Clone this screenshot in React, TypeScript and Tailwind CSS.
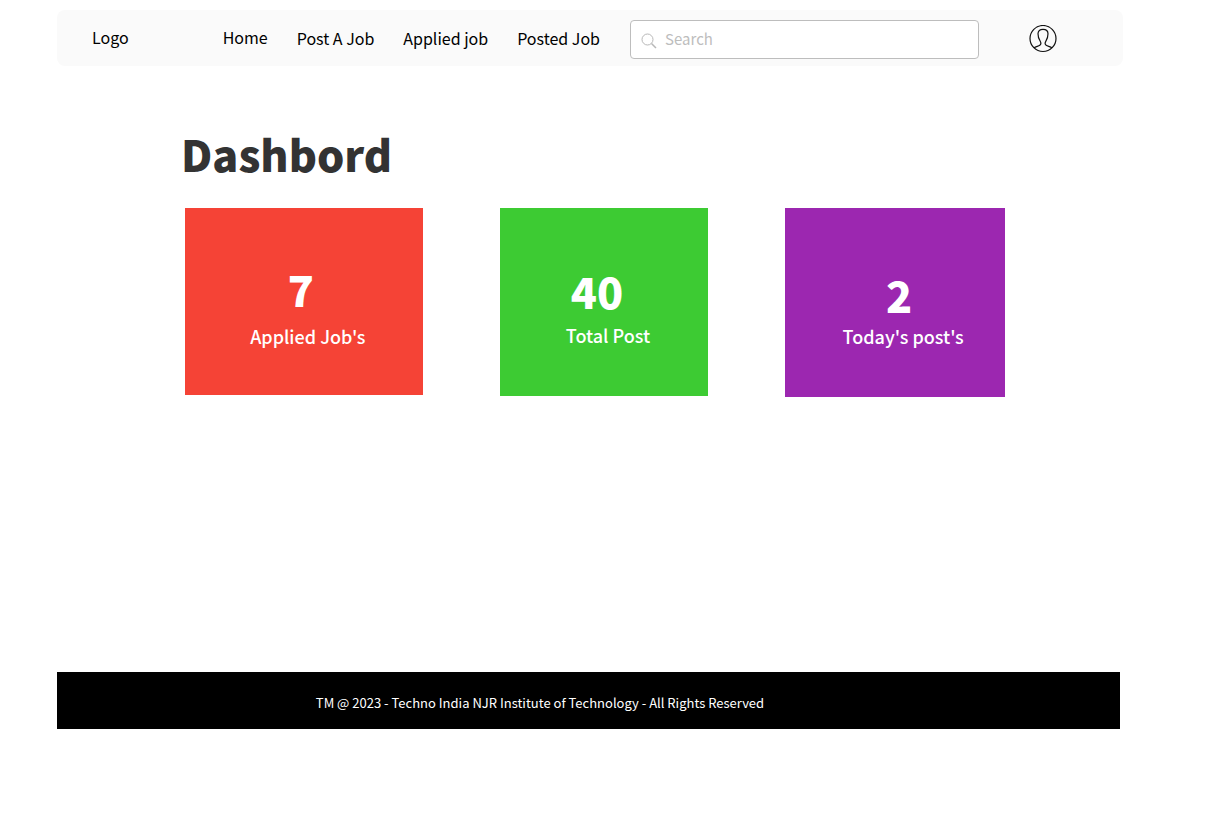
const navLinks = [
  { label: "Home", pad: "pb-0.5" },
  { label: "Post A Job", pad: "" },
  { label: "Applied job", pad: "" },
  { label: "Posted Job", pad: "" },
];

const stats = [
  { value: "7", label: "Applied Job's", card: "bg-[#f54336] min-h-[187px] pt-[52px]", valueBox: "pr-1.5", labelBox: "pl-2 pt-1.5" },
  { value: "40", label: "Total Post", card: "bg-[#3dcb33] min-h-[188px] pt-[54px]", valueBox: "pr-3.5", labelBox: "pl-2 pt-[3px]" },
  { value: "2", label: "Today's post's", card: "bg-[#9c27b0] min-h-[189px] pt-[58px]", valueBox: "pl-2", labelBox: "pl-4" },
];

function SearchIcon() {
  return (
    <svg className="mt-1 h-4 w-4 shrink-0" viewBox="0 0 16 16" fill="none" stroke="#b8b8b8" aria-hidden="true">
      <circle cx="6.5" cy="6.5" r="5.5" />
      <path d="M10.5 10.5 15 15" strokeWidth="1.5" />
    </svg>
  );
}

function UserIcon() {
  return (
    <svg className="h-7 w-7" viewBox="0 0 28 28" fill="none" stroke="#111" strokeWidth="1.2" aria-hidden="true">
      <circle cx="14" cy="13.5" r="13" />
      <path d="M5 22.8C7 21.5 9.4 21.3 10.8 20.3C12.2 19.3 12 17.4 11 15.8C9.5 13.5 9 11 9 8.8C9 6 10.9 4.3 14 4.3S19 6 19 8.8C19 11 18.5 13.5 17 15.8C16 17.4 15.8 19.3 17.2 20.3C18.6 21.3 21 21.5 23 22.8" />
    </svg>
  );
}

export default function App() {
  return (
    <div className="flex min-h-screen flex-col bg-white pt-2.5 pb-[99px] pl-[57px] font-['Noto_Sans_CJK_SC',sans-serif] text-black">
      <header className="mr-[87px] flex h-14 items-center rounded-lg bg-[#fafafa] pr-[66px] pl-[35px] text-base leading-6">
        <a href="#" className="mr-[94px] pb-0.5">Logo</a>
        <nav className="flex items-center gap-[29px] whitespace-nowrap">
          {navLinks.map((link) => (
            <a key={link.label} href="#" className={link.pad}>{link.label}</a>
          ))}
        </nav>
        <label className="mt-0.5 ml-[30px] flex h-[39px] min-w-0 flex-1 items-center gap-2 rounded border border-[#bdbdbd] bg-white px-2.5">
          <SearchIcon />
          <input type="search" aria-label="Search" placeholder="Search" className="min-w-0 flex-1 text-[15px] leading-6 outline-none placeholder:text-[#bdbdbd]" />
        </label>
        <button type="button" aria-label="Profile" className="mt-0.5 ml-[50px]">
          <UserIcon />
        </button>
      </header>

      <main className="mr-[205px] pt-[58px] pl-32">
        <h1 className="-ml-1 text-[43px] leading-[58px] font-black text-[#333]">Dashbord</h1>
        <section className="mt-[26px] grid grid-cols-[238fr_209fr_220fr] items-start gap-[77px] text-center text-white">
          {stats.map((stat) => (
            <article key={stat.label} className={stat.card}>
              <p className={`text-[43px] leading-[56px] font-black ${stat.valueBox}`}>{stat.value}</p>
              <h2 className={`text-lg leading-7 font-medium ${stat.labelBox}`}>{stat.label}</h2>
            </article>
          ))}
        </section>
      </main>

      <footer className="mt-auto mr-[90px] flex h-[57px] items-center justify-center bg-black pt-1 pr-[97px] text-[13px] leading-5 text-white">
        <p>TM @ 2023 - Techno India NJR Institute of Technology - All Rights Reserved</p>
      </footer>
    </div>
  );
}
